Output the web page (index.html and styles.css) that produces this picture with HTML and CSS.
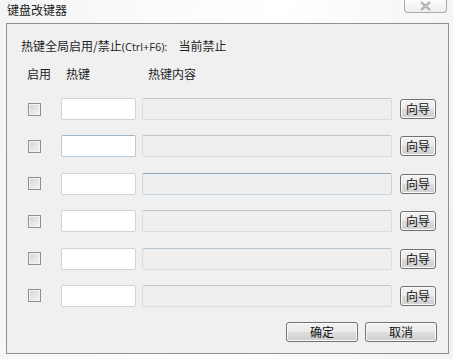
FILE: index.html
```html
<!DOCTYPE html>
<html lang="zh-CN">
<head>
    <meta charset="UTF-8">
    <title>键盘改键器</title>
    <link rel="stylesheet" href="styles.css">
</head>
<body>

<div class="window">
    <div class="titlebar">
        <span class="title">键盘改键器</span>
        <button class="close" type="button">
            <svg width="13" height="10" viewBox="0 0 13 10">
                <path d="M2 1 L11 9 M11 1 L2 9" stroke="#8a8a8a" stroke-width="2.2" fill="none"/>
                <path d="M2 1 L11 9 M11 1 L2 9" stroke="#f4f4f4" stroke-width="0.8" fill="none"/>
            </svg>
        </button>
    </div>

    <div class="panel">
        <div class="status">
            <span>热键全局启用/禁止<span class="latin">(Ctrl+F6):</span></span>
            <span class="state">当前禁止</span>
        </div>

        <div class="head">
            <span class="h-enable">启用</span>
            <span class="h-key">热键</span>
            <span>热键内容</span>
        </div>

        <div class="rows">
            <div class="row">
                <span class="check"></span>
                <input class="key" type="text">
                <div class="content"></div>
                <button class="btn small" type="button">向导</button>
            </div>
            <div class="row">
                <span class="check"></span>
                <input class="key hover" type="text">
                <div class="content"></div>
                <button class="btn small" type="button">向导</button>
            </div>
            <div class="row">
                <span class="check"></span>
                <input class="key" type="text">
                <div class="content hover"></div>
                <button class="btn small" type="button">向导</button>
            </div>
            <div class="row">
                <span class="check"></span>
                <input class="key" type="text">
                <div class="content soft"></div>
                <button class="btn small" type="button">向导</button>
            </div>
            <div class="row">
                <span class="check"></span>
                <input class="key" type="text">
                <div class="content soft"></div>
                <button class="btn small" type="button">向导</button>
            </div>
            <div class="row">
                <span class="check"></span>
                <input class="key" type="text">
                <div class="content"></div>
                <button class="btn small" type="button">向导</button>
            </div>
        </div>

        <div class="footer">
            <button class="btn wide" type="button">确定</button>
            <button class="btn wide" type="button">取消</button>
        </div>
    </div>
</div>

</body>
</html>
```

FILE: styles.css
```css
body {
    margin: 0;
    font-family: "Noto Sans CJK SC", "Noto Sans", sans-serif;
    font-size: 12px;
    color: #1e1e1e;
}

.window {
    width: 453px;
    height: 359px;
    box-sizing: border-box;
    overflow: hidden;
    background: linear-gradient(100deg, #f3f4f5 0%, #fbfbfb 30%, #ffffff 55%, #f6f7f8 80%, #f1f2f3 100%);
}

.titlebar {
    height: 23px;
    display: flex;
    justify-content: space-between;
    align-items: flex-start;
    padding: 0 6px 0 7px;
    box-sizing: border-box;
}

.title {
    line-height: 20px;
    font-size: 12px;
    color: #222;
}

.close {
    width: 43px;
    height: 14px;
    margin-top: -1px;
    padding: 0;
    border: 1px solid #a9a9a9;
    border-top: none;
    border-radius: 0 0 4px 4px;
    background: linear-gradient(#fdfdfd, #eeeeee);
    display: flex;
    justify-content: center;
    align-items: center;
}

.panel {
    width: 443px;
    height: 331px;
    margin-left: 6px;
    box-sizing: border-box;
    border: 1px solid #8f9090;
    background-color: #f0f0f0;
    padding: 14px 11px 0 14px;
}

.status {
    line-height: 16px;
    display: flex;
}

.latin {
    font-family: "Open Sans", "DejaVu Sans", sans-serif;
    font-size: 11px;
}

.state {
    margin-left: 11px;
}

.head {
    margin-top: 11px;
    padding-left: 6px;
    line-height: 16px;
    display: flex;
}

.h-enable {
    width: 39px;
}

.h-key {
    width: 82px;
}

.rows {
    margin-top: 16px;
    padding-left: 7px;
    display: flex;
    flex-direction: column;
    gap: 15.4px;
}

.row {
    display: flex;
    align-items: center;
    height: 22px;
}

.check {
    flex: none;
    width: 13px;
    height: 13px;
    box-sizing: border-box;
    border: 1px solid #8e8f8f;
    background: linear-gradient(135deg, #d4d4d4, #f6f6f6);
    box-shadow: inset 0 0 0 1px #f4f4f4;
}

.key {
    flex: none;
    margin: 0 0 0 20px;
    width: 75px;
    height: 22px;
    box-sizing: border-box;
    border: 1px solid #d2d4d6;
    border-radius: 2px;
    background: #ffffff;
    padding: 0 3px;
    font: inherit;
}

.content {
    flex: none;
    margin-left: 6px;
    width: 250px;
    height: 22px;
    box-sizing: border-box;
    border: 1px solid #dcdcdc;
    border-top-color: #c5c5c5;
    border-radius: 2px;
    background: #efefef;
}

.key.hover {
    border-color: #b8cbd9;
    border-top-color: #9fb7c9;
}

.content.hover {
    border-color: #c3d5e2;
    border-top-color: #92aabb;
}

.content.soft {
    border-top-color: #b6c4cf;
}

.btn {
    font-family: "Noto Sans CJK SC", sans-serif;
    font-size: 12px;
    color: #111;
    padding: 0;
    height: 20px;
    box-sizing: border-box;
    border: 1px solid #707070;
    border-radius: 3px;
    background: linear-gradient(#f2f2f2 0%, #ebebeb 50%, #dddddd 51%, #cfcfcf 100%);
    box-shadow: inset 0 0 0 1px #fcfcfc;
    line-height: 16px;
}

.small {
    flex: none;
    margin-left: 8px;
    width: 36px;
}

.footer {
    margin-top: 15px;
    display: flex;
    justify-content: flex-end;
    gap: 7px;
}

.wide {
    width: 72px;
}
```
